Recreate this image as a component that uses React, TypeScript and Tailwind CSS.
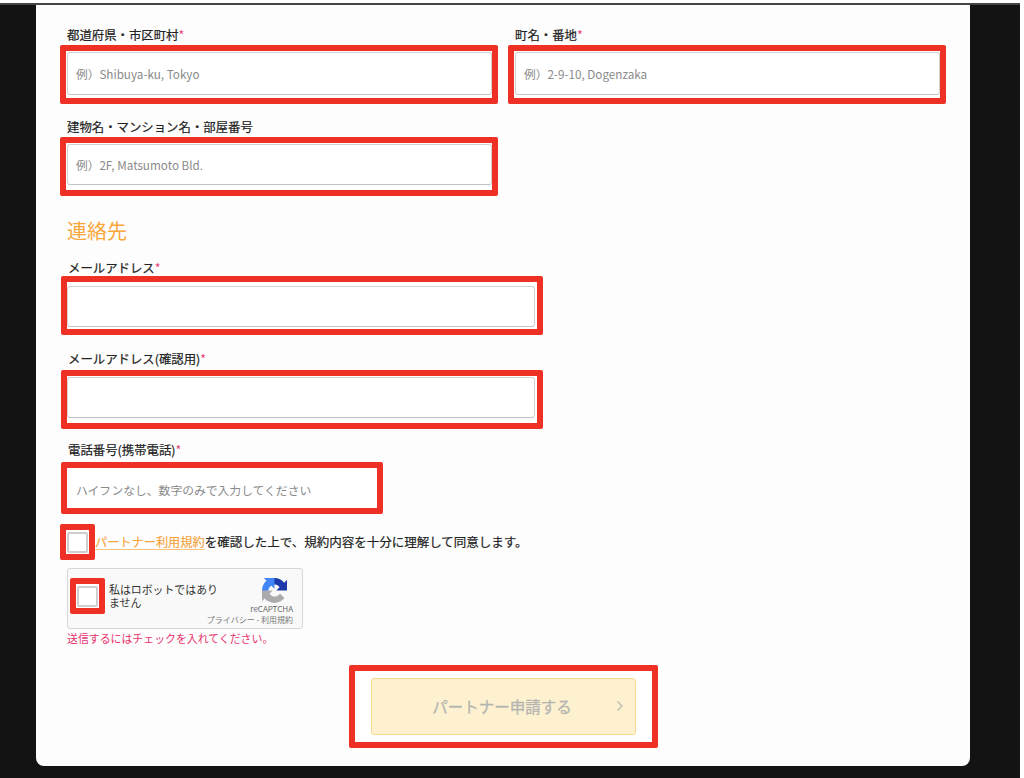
const font = '[font-family:"Noto_Sans_CJK_JP","Noto_Sans",sans-serif]';

function Label({ text, required, className }: { text: string; required?: boolean; className: string }) {
    return (
        <div className={`h-[18px] pl-[7px] text-[12.4px] leading-[18px] text-[#222] ${className}`}>
            <span className="[-webkit-text-stroke:0.2px_#222]">{text}</span>
            {required && <span className="text-[#e8336e]">*</span>}
        </div>
    );
}

function AddressInput({ placeholder, inputClass }: { placeholder: string; inputClass: string }) {
    return (
        <div className="flex h-[59px] w-[438px] items-start rounded-[2px] border-[6px] border-[#ee3124] bg-white pt-px pl-px">
            <input
                placeholder={placeholder}
                className={`w-[425px] rounded-[3px] border border-[#d2d2d2] border-b-[#c4c4c4] bg-white pl-[8px] text-[11.7px] placeholder:text-[#8a8a8a] outline-none ${inputClass}`}
            />
        </div>
    );
}

function EmailInput({ frameClass }: { frameClass: string }) {
    return (
        <div className={`flex h-[59px] w-[482px] items-start rounded-[2px] border-[6px] border-[#ee3124] bg-white ${frameClass}`}>
            <input className="h-[41px] w-[468px] rounded-[3px] border border-[#d2d2d2] border-b-[#c4c4c4] bg-white outline-none" />
        </div>
    );
}

function RecaptchaLogo() {
    return (
        <svg viewBox="0 0 64 64" className="h-[25px] w-[25px]">
            <path d="M64 31.955l-.033-1.37V4.687l-7.16 7.16C50.948 4.674 42.033.093 32.05.093c-10.4 0-19.622 4.958-25.458 12.635l11.736 11.86a15.55 15.55 0 0 1 4.754-5.334c2.05-1.6 4.952-2.906 8.968-2.906.485 0 .86.057 1.135.163 4.976.393 9.288 3.14 11.828 7.124l-8.307 8.307c10.522-.04 22.4-.066 27.295.003" fill="#1c3aa9" />
            <path d="M31.862.094l-1.37.033H4.594l7.16 7.16C4.58 13.147 0 22.06 0 32.046c0 10.4 4.958 19.622 12.635 25.458l11.86-11.736a15.55 15.55 0 0 1-5.334-4.754c-1.6-2.05-2.906-4.952-2.906-8.968 0-.485.057-.86.163-1.135.393-4.976 3.14-9.288 7.124-11.828l8.307 8.307c-.04-10.522-.066-22.4.003-27.295" fill="#4285f4" />
            <path d="M.001 32.045l.033 1.37v25.898l7.16-7.16c5.86 7.173 14.774 11.754 24.76 11.754 10.4 0 19.622-4.958 25.458-12.635l-11.736-11.86a15.55 15.55 0 0 1-4.754 5.334c-2.05 1.6-4.952 2.906-8.968 2.906-.485 0-.86-.057-1.135-.163-4.976-.393-9.288-3.14-11.828-7.124l8.307-8.307c-10.522.04-22.4.066-27.295-.003" fill="#ababab" />
        </svg>
    );
}

function CheckFrame() {
    return (
        <div className="flex h-[36px] w-[35px] shrink-0 items-center justify-center rounded-[2px] border-[6px] border-[#ee3124] bg-white">
            <div className="h-[21px] w-[21px] rounded-[2px] border-2 border-[#cfcfcf] bg-white" />
        </div>
    );
}

export default function App() {
    return (
        <div className={`h-[778px] w-[1024px] overflow-hidden bg-white pt-[3px] pr-[4px] ${font}`}>
            <div className="h-[775px] border-t-2 border-[#444] bg-[#131313] pl-[36px]">
                <div className="h-[761px] w-[934px] rounded-b-[8px] bg-[#fdfdfd] pt-[21px] pl-[24px]">
                    {/* 住所 */}
                    <div className="flex gap-[11px]">
                        <div>
                            <Label text="都道府県・市区町村" required className="mb-px" />
                            <AddressInput placeholder="例）Shibuya-ku, Tokyo" inputClass="h-[43px]" />
                        </div>
                        <div className="-ml-px">
                            <Label text="町名・番地" required className="mb-px" />
                            <AddressInput placeholder="例）2-9-10, Dogenzaka" inputClass="h-[43px]" />
                        </div>
                    </div>
                    <div className="mt-[14px]">
                        <Label text="建物名・マンション名・部屋番号" className="mb-px" />
                        <AddressInput placeholder="例）2F, Matsumoto Bld." inputClass="h-[41px]" />
                    </div>

                    {/* 連絡先 */}
                    <h2 className="mt-[21px] h-[28px] pl-[7px] text-[20px] leading-[28px] text-[#f9a63a]">連絡先</h2>
                    <div className="mt-[14px] pl-px">
                        <Label text="メールアドレス" required className="-mb-px" />
                        <EmailInput frameClass="pt-[4px]" />
                    </div>
                    <div className="mt-[15px] pl-px">
                        <Label text="メールアドレス(確認用)" required className="mb-[2px]" />
                        <EmailInput frameClass="pt-px" />
                    </div>
                    <div className="mt-[12px] pl-px">
                        <Label text="電話番号(携帯電話)" required className="mb-[3px]" />
                        <div className="h-[52px] w-[322px] rounded-[2px] border-[6px] border-[#ee3124] bg-white">
                            <input
                                placeholder="ハイフンなし、数字のみで入力してください"
                                className="h-[42px] w-full pl-[9px] text-[11.8px] placeholder:text-[#8a8a8a] outline-none"
                            />
                        </div>
                    </div>

                    {/* 規約 */}
                    <div className="mt-[10px] flex items-center">
                        <CheckFrame />
                        <p className="text-[12.5px] text-[#222]">
                            <a className="text-[12.2px] text-[#f5a33b] underline decoration-[#fbc27e] underline-offset-2 [-webkit-text-stroke:0.15px_#f5a33b]">パートナー利用規約</a>
                            <span className="[-webkit-text-stroke:0.2px_#222]">を確認した上で、規約内容を十分に理解して同意します。</span>
                        </p>
                    </div>

                    {/* reCAPTCHA */}
                    <div className="mt-[8px] ml-[7px] flex h-[61px] w-[236px] rounded-[3px] border border-[#d6d6d6] bg-[#f9f9f9] pt-[9px] pl-[2px]">
                        <CheckFrame />
                        <div className="mt-[5px] ml-[4px] w-[112px] text-[10.9px] leading-[13px] text-[#333]">
                            私はロボットではあり ません
                        </div>
                        <div className="flex flex-1 flex-col items-end pr-[9px]">
                            <div className="pr-[6px]">
                                <RecaptchaLogo />
                            </div>
                            <div className="mt-0 text-[8px] leading-[12px] text-[#666]">reCAPTCHA</div>
                            <div className="-ml-[40px] text-[8px] leading-[10px] whitespace-nowrap text-[#777]">
                                プライバシー - 利用規約
                            </div>
                        </div>
                    </div>
                    <p className="mt-[2px] ml-[7px] h-[14px] text-[10.9px] leading-[14px] text-[#e8336e]">
                        送信するにはチェックを入れてください。
                    </p>

                    {/* 送信 */}
                    <div className="mt-[20px] ml-[289px] flex h-[83px] w-[309px] items-center justify-center rounded-[2px] border-[6px] border-[#ee3124] bg-white">
                        <button className="relative h-[57px] w-[265px] rounded-[3px] border border-[#fbd88a] bg-[#fdf1d0] pr-[3px] text-[15.5px] text-[#b5b5b0] [-webkit-text-stroke:0.3px_#b5b5b0]">
                            パートナー申請する
                            <svg viewBox="0 0 8 12" className="absolute top-[21px] right-[11px] h-[12px] w-[8px]" fill="none" stroke="#b5b5b0" strokeWidth="1.2">
                                <path d="M1.5 1.5L6 6l-4.5 4.5" />
                            </svg>
                        </button>
                    </div>
                </div>
            </div>
        </div>
    );
}
